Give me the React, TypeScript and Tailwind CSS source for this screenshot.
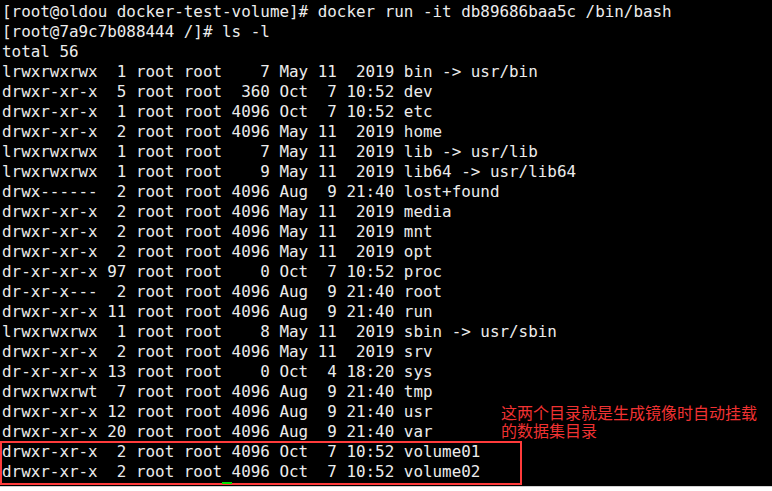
import React from "react";

const lines = [
  "[root@oldou docker-test-volume]# docker run -it db89686baa5c /bin/bash",
  "[root@7a9c7b088444 /]# ls -l",
  "total 56",
  "lrwxrwxrwx  1 root root    7 May 11  2019 bin -> usr/bin",
  "drwxr-xr-x  5 root root  360 Oct  7 10:52 dev",
  "drwxr-xr-x  1 root root 4096 Oct  7 10:52 etc",
  "drwxr-xr-x  2 root root 4096 May 11  2019 home",
  "lrwxrwxrwx  1 root root    7 May 11  2019 lib -> usr/lib",
  "lrwxrwxrwx  1 root root    9 May 11  2019 lib64 -> usr/lib64",
  "drwx------  2 root root 4096 Aug  9 21:40 lost+found",
  "drwxr-xr-x  2 root root 4096 May 11  2019 media",
  "drwxr-xr-x  2 root root 4096 May 11  2019 mnt",
  "drwxr-xr-x  2 root root 4096 May 11  2019 opt",
  "dr-xr-xr-x 97 root root    0 Oct  7 10:52 proc",
  "dr-xr-x---  2 root root 4096 Aug  9 21:40 root",
  "drwxr-xr-x 11 root root 4096 Aug  9 21:40 run",
  "lrwxrwxrwx  1 root root    8 May 11  2019 sbin -> usr/sbin",
  "drwxr-xr-x  2 root root 4096 May 11  2019 srv",
  "dr-xr-xr-x 13 root root    0 Oct  4 18:20 sys",
  "drwxrwxrwt  7 root root 4096 Aug  9 21:40 tmp",
  "drwxr-xr-x 12 root root 4096 Aug  9 21:40 usr",
  "drwxr-xr-x 20 root root 4096 Aug  9 21:40 var",
  "drwxr-xr-x  2 root root 4096 Oct  7 10:52 volume01",
  "drwxr-xr-x  2 root root 4096 Oct  7 10:52 volume02",
];

export default function App() {
  return (
    <div className="w-[772px] h-[491px] overflow-hidden bg-white">
      {/* Terminal */}
      <div className="relative h-[486px] bg-black">
        <pre className="pl-[2px] pt-[2px] [font-family:'DejaVu_Sans_Mono',monospace] text-[15.9px] leading-[20px] text-[#ececec]">
          {lines.join("\n")}
        </pre>

        {/* annotation */}
        <div className="absolute left-[501px] top-[403px] [font-family:'Noto_Sans_CJK_SC',sans-serif] text-[16px] leading-[18px] text-[#f03232]">
          <div>这两个目录就是生成镜像时自动挂载</div>
          <div>的数据集目录</div>
        </div>
        <div className="absolute left-0 top-[441px] w-[522px] h-[44px] border-2 border-[#ff3b3b]" />
        <div className="absolute left-[222px] top-[482px] w-[10px] h-[2px] bg-[#00e000]" />
      </div>

      {/* article text below the screenshot */}
      <div className="border-t border-[#d0d0d0] pl-[4px] pt-[1px] [font-family:'Noto_Sans_CJK_SC',sans-serif] text-[16px] leading-[20px] text-[#222] whitespace-nowrap">
        我们来检查一下宿主机中的目录，看看是否已经挂载成功了，下面在宿主机上查看挂载的数据卷目录
      </div>
    </div>
  );
}
